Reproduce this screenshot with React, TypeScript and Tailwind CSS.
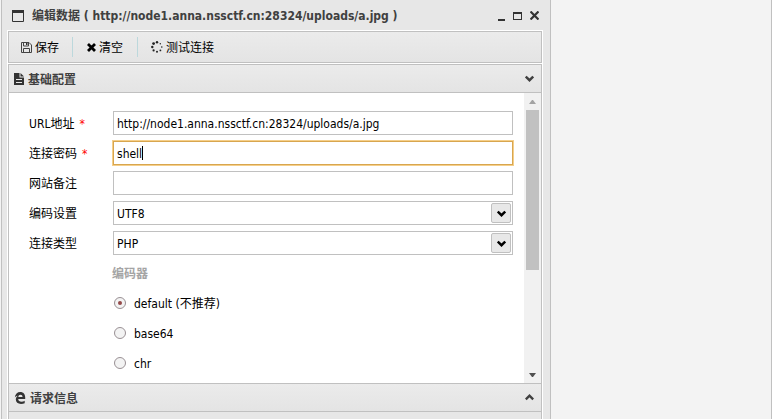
import { useState } from "react";
import type { ReactNode } from "react";

const encoders = [
  { id: "default", label: "default (不推荐)" },
  { id: "base64", label: "base64" },
  { id: "chr", label: "chr" },
];

const fieldClass = "block h-6 w-full border bg-white px-[3px] text-black outline-none";

function SaveIcon() {
  return (
    <svg width="11" height="11" viewBox="0 0 11 11" fill="none" stroke="#444" aria-hidden="true">
      <path d="M.5.5h7.500l2.500 2.500v7.500H.5z" />
      <path d="M2.500.5v3.500h5V.5M2.500 10.500v-4h6v4" />
      <path d="M5 1h1.500v2H5z" fill="#333" stroke="none" />
    </svg>
  );
}

function CrossIcon() {
  return (
    <svg width="9" height="9" viewBox="0 0 9 9" stroke="currentColor" strokeWidth="2.800" aria-hidden="true">
      <path d="M1 1l7 7M8 1L1 8" />
    </svg>
  );
}

function SpinnerIcon() {
  return (
    <svg width="12" height="12" viewBox="0 0 12 12" fill="#222" aria-hidden="true">
      <circle cx="6" cy="1.300" r="1.200" />
      <circle cx="9.300" cy="2.700" r=".7" />
      <circle cx="10.800" cy="6" r=".8" />
      <circle cx="9.400" cy="9.400" r=".9" />
      <circle cx="6" cy="10.800" r="1" />
      <circle cx="2.600" cy="9.400" r="1.100" />
      <circle cx="1.300" cy="6" r="1.200" />
      <circle cx="2.600" cy="2.600" r="1.400" />
    </svg>
  );
}

function FileIcon() {
  return (
    <svg width="10" height="12" viewBox="0 0 10 12" fill="#333" aria-hidden="true">
      <path d="M0 0h5.500v4.500H10V12H0z" />
      <path d="M6.500 0L10 3.500H6.500z" />
      <path d="M2 6.500h6M2 9.500h6" stroke="#e8e8e8" />
    </svg>
  );
}

function BrowserIcon() {
  return (
    <svg width="12" height="12" viewBox="0 0 12 12" fill="#333" aria-hidden="true">
      <path d="M.8 5.500C1.200 2 3.300 0 6.200 0 9.400 0 11.200 2.200 11.200 5.300V7H4.200c.1 1.900 1.400 2.700 3.300 2.700 1.200 0 2.200-.3 3.200-.9v2.400c-1.100.6-2.300.8-3.700.8C3.800 12 1.800 10.300 1.800 7.600c0-1.700.7-3 2-3.900-1.300.2-2.300.8-3 1.800zM4.300 5h4.200c0-1.500-.7-2.300-2-2.300S4.500 3.600 4.300 5z" />
    </svg>
  );
}

function Chevron({ up = false }: { up?: boolean }) {
  return (
    <svg width="9" height="7" viewBox="0 0 9 7" fill="none" stroke="currentColor" strokeWidth="2.400" aria-hidden="true">
      <path d={up ? "M.8 5.400L4.500 1.700l3.700 3.700" : "M.8 1.500l3.700 3.700 3.700-3.700"} />
    </svg>
  );
}

function ToolbarButton({ icon, children }: { icon: ReactNode; children: ReactNode }) {
  return (
    <button
      type="button"
      className="flex h-5 items-center gap-[3px] border-r border-[#bcd8dc] px-[14px] first:pr-[13px] first:pl-3 last:border-r-0 last:pl-[13px]"
    >
      {icon}
      <span className="pt-px">{children}</span>
    </button>
  );
}

function SectionHeader({ icon, title, open }: { icon: ReactNode; title: string; open: boolean }) {
  return (
    <button
      type="button"
      aria-expanded={open}
      className="flex h-7 w-full items-center gap-1 border-b border-[#c0c0c0] bg-linear-to-b from-[#ebebeb] to-[#e4e4e4] pr-[7px] pl-[5px] font-bold text-[#404040]"
    >
      {icon}
      <span className="flex-1 pt-[2px] text-left">{title}</span>
      <Chevron up={!open} />
    </button>
  );
}

function Field({ id, label, required, children }: { id: string; label: string; required?: boolean; children: ReactNode }) {
  return (
    <div className="flex h-[30px] items-center">
      <label htmlFor={id} className="w-[84px] shrink-0 pt-px">
        {label}
        {required && <span className="ml-[5px] text-[#ff0000]">*</span>}
      </label>
      <div className="relative flex-1">{children}</div>
    </div>
  );
}

function SelectField({ id, options }: { id: string; options: string[] }) {
  return (
    <>
      <select id={id} className={`${fieldClass} appearance-none border-[#c0c0c0] pt-px`}>
        {options.map((option) => (
          <option key={option}>{option}</option>
        ))}
      </select>
      <span className="pointer-events-none absolute inset-y-[2px] right-[2px] flex w-5 items-center justify-center rounded-xs border border-[#c0c0c0] bg-[#e8e8e8]">
        <Chevron />
      </span>
    </>
  );
}

export default function App() {
  const [url, setUrl] = useState("http://node1.anna.nssctf.cn:28324/uploads/a.jpg");
  const [password, setPassword] = useState("shell");
  const [encoder, setEncoder] = useState("default");

  return (
    <div className="flex h-screen overflow-hidden border-r border-[#c0c0c0] bg-[#f3f3f3] pl-px font-['DejaVu_Sans_Condensed','Noto_Sans_CJK_SC',sans-serif] text-[12px] leading-4 text-black">
      <div className="flex w-5/7 flex-col border-x border-[#c0c0c0] bg-[#e7e7e7] pr-[7px] pl-[5px]">
        <header className="flex h-[30px] shrink-0 items-center gap-2 pt-px pr-1 pl-[5px] text-[#404040]">
          <svg width="12" height="12" viewBox="0 0 12 12" fill="none" stroke="#333" aria-hidden="true">
            <path d="M.5.5h11v11H.5z" />
            <path d="M0 1.500h12" strokeWidth="3" />
          </svg>
          <h1 className="flex-1 truncate font-bold">编辑数据 ( {url} )</h1>
          <div className="flex items-center gap-2">
            <button type="button" aria-label="最小化" className="flex h-3 w-[7px] items-end">
              <span className="mb-px block h-[2px] w-full bg-[#333]" />
            </button>
            <button type="button" aria-label="最大化" className="block h-2 w-[9px] border border-t-2 border-[#333]" />
            <button type="button" aria-label="关闭">
              <svg width="9" height="9" viewBox="0 0 9 9" stroke="#333" strokeWidth="2.200" aria-hidden="true">
                <path d="M.5.5l8 8M8.500.5l-8 8" />
              </svg>
            </button>
          </div>
        </header>

        <div className="border border-white">
          <div className="flex h-8 items-center border border-[#c0c0c0] bg-linear-to-b from-[#ebebeb] to-[#e4e4e4]">
            <ToolbarButton icon={<SaveIcon />}>保存</ToolbarButton>
            <ToolbarButton icon={<CrossIcon />}>清空</ToolbarButton>
            <ToolbarButton icon={<SpinnerIcon />}>测试连接</ToolbarButton>
          </div>
        </div>

        <main className="flex flex-1 flex-col border-x border-white">
          <div className="flex-1 border-x border-t border-[#c0c0c0]">
            <SectionHeader open title="基础配置" icon={<FileIcon />} />
            <div className="flex bg-white">
              <form className="flex-1 pt-[15px] pr-[11px] pb-[5px] pl-5">
                <Field id="url" label="URL地址" required>
                  <input
                    id="url"
                    className={`${fieldClass} border-[#c0c0c0] pt-px`}
                    value={url}
                    onChange={(e) => setUrl(e.target.value)}
                  />
                </Field>
                <Field id="password" label="连接密码" required>
                  <input
                    id="password"
                    className={`${fieldClass} border-[#d8a64f] pt-px ring-1 ring-[#f5cf8a]`}
                    value={password}
                    onChange={(e) => setPassword(e.target.value)}
                  />
                  <span aria-hidden="true" className="pointer-events-none absolute inset-y-[5px] left-1 border-r border-black text-transparent">
                    {password}
                  </span>
                </Field>
                <Field id="note" label="网站备注">
                  <input id="note" className={`${fieldClass} border-[#c0c0c0]`} />
                </Field>
                <Field id="encoding" label="编码设置">
                  <SelectField id="encoding" options={["UTF8"]} />
                </Field>
                <Field id="type" label="连接类型">
                  <SelectField id="type" options={["PHP"]} />
                </Field>
                <fieldset className="pl-[83px]">
                  <legend className="flex h-[30px] items-center pt-px font-bold text-[#a4a4a4]">编码器</legend>
                  {encoders.map((item) => (
                    <label key={item.id} className="flex h-[30px] items-center gap-2 pl-[2px]">
                      <input
                        type="radio"
                        name="encoder"
                        className="grid size-3 appearance-none place-items-center rounded-full border border-[#999094] bg-[#f3f3f3] before:size-1 before:rounded-full checked:before:bg-[#944a4a]"
                        checked={encoder === item.id}
                        onChange={() => setEncoder(item.id)}
                      />
                      <span className="pt-px">{item.label}</span>
                    </label>
                  ))}
                </fieldset>
              </form>
              <div aria-hidden="true" className="flex w-[17px] flex-col items-center bg-[#f1f1f1]">
                <span className="flex h-[17px] items-center">
                  <svg width="7" height="4" fill="#a3a3a3">
                    <path d="M3 0h1l3 4H0z" />
                  </svg>
                </span>
                <span className="h-40 w-[13px] bg-[#c1c1c1]" />
                <span className="mt-auto flex h-[17px] items-center">
                  <svg width="7" height="4" fill="#505050">
                    <path d="M0 0h7L4 4H3z" />
                  </svg>
                </span>
              </div>
            </div>
            <div className="border-t border-[#c0c0c0]">
              <SectionHeader open={false} title="请求信息" icon={<BrowserIcon />} />
            </div>
          </div>
        </main>
      </div>
    </div>
  );
}
